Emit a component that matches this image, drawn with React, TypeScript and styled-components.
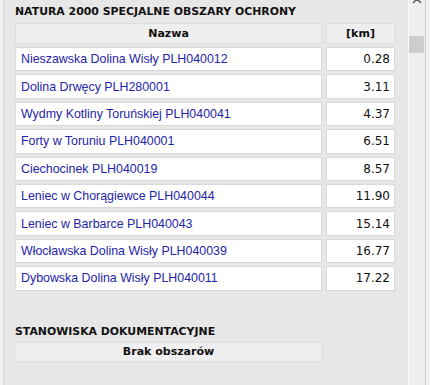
import React from "react";
import styled, { createGlobalStyle } from "styled-components";

const Global = createGlobalStyle`
  html, body { margin: 0; padding: 0; background: #f0f0f0; overflow: hidden; }
  * { box-sizing: border-box; }
`;

const Frame = styled.div`
  width: 430px;
  height: 385px;
  display: flex;
  background: #f0f0f0;
  overflow: hidden;
`;

const Panel = styled.div`
  margin-left: 3px;
  width: 406px;
  height: 385px;
  background: #e7e7e7;
  border-left: 1px solid #d6d6d6;
  border-right: 1px solid #fafafa;
  padding: 3px 0 0 11px;
  display: flex;
  flex-direction: column;
`;

const SectionTitle = styled.div<{ $top?: number }>`
  font-family: "DejaVu Sans", Verdana, sans-serif;
  font-weight: bold;
  font-size: 10.9px;
  color: #111;
  height: 18px;
  line-height: 18px;
  margin-top: ${(p) => p.$top ?? 0}px;
`;

const Table = styled.div`
  display: grid;
  grid-template-columns: 307px 69px;
  column-gap: 4px;
  row-gap: 3px;
  width: 380px;
  margin-top: 2px;
`;

const HeadCell = styled.div`
  height: 21px;
  background: #efefef;
  border: 1px solid #dedede;
  font-family: "DejaVu Sans", Verdana, sans-serif;
  font-weight: bold;
  font-size: 11px;
  color: #111;
  display: flex;
  align-items: center;
  justify-content: center;
`;

const NameCell = styled.div`
  height: 24.4px;
  background: #fff;
  border: 1px solid #dadada;
  font-family: "Liberation Sans", Arial, sans-serif;
  font-size: 12.4px;
  color: #2424a8;
  display: flex;
  align-items: center;
  padding-left: 5px;
  white-space: nowrap;
`;

const NumCell = styled.div`
  height: 24.4px;
  background: #fff;
  border: 1px solid #dadada;
  font-family: "DejaVu Sans", Verdana, sans-serif;
  font-size: 12px;
  color: #111;
  display: flex;
  align-items: center;
  justify-content: flex-end;
  padding-right: 4px;
`;

const EmptyCell = styled.div`
  width: 307px;
  height: 20px;
  margin-top: 1px;
  background: #efefef;
  border: 1px solid #e2e2e2;
  border-radius: 2px;
  font-family: "DejaVu Sans", Verdana, sans-serif;
  font-weight: bold;
  font-size: 11px;
  color: #111;
  display: flex;
  align-items: center;
  justify-content: center;
`;

const Scrollbar = styled.div`
  position: relative;
  width: 17px;
  height: 385px;
  background: #efefef;
  border-right: 1px solid #cdcdcd;
`;

const Thumb = styled.div`
  position: absolute;
  left: 0;
  top: 36px;
  width: 15px;
  height: 17px;
  background: #cdcdcd;
`;

const Arrow = styled.svg`
  position: absolute;
  left: 3px;
  top: -3px;
`;

const rows: [string, string][] = [
  ["Nieszawska Dolina Wisły PLH040012", "0.28"],
  ["Dolina Drwęcy PLH280001", "3.11"],
  ["Wydmy Kotliny Toruńskiej PLH040041", "4.37"],
  ["Forty w Toruniu PLH040001", "6.51"],
  ["Ciechocinek PLH040019", "8.57"],
  ["Leniec w Chorągiewce PLH040044", "11.90"],
  ["Leniec w Barbarce PLH040043", "15.14"],
  ["Włocławska Dolina Wisły PLH040039", "16.77"],
  ["Dybowska Dolina Wisły PLH040011", "17.22"],
];

export default function App() {
  return (
    <>
      <Global />
      <Frame>
        <Panel>
          <SectionTitle>NATURA 2000 SPECJALNE OBSZARY OCHRONY</SectionTitle>
          <Table>
            <HeadCell>Nazwa</HeadCell>
            <HeadCell>[km]</HeadCell>
            {rows.map(([n, d]) => (
              <React.Fragment key={n}>
                <NameCell>{n}</NameCell>
                <NumCell>{d}</NumCell>
              </React.Fragment>
            ))}
          </Table>
          <SectionTitle $top={32}>STANOWISKA DOKUMENTACYJNE</SectionTitle>
          <EmptyCell>Brak obszarów</EmptyCell>
        </Panel>
        <Scrollbar>
          <Arrow width="10" height="10" viewBox="0 0 10 10">
            <path d="M1 6 L5 2 L9 6" stroke="#606060" strokeWidth="1.6" fill="none" />
          </Arrow>
          <Thumb />
        </Scrollbar>
      </Frame>
    </>
  );
}
